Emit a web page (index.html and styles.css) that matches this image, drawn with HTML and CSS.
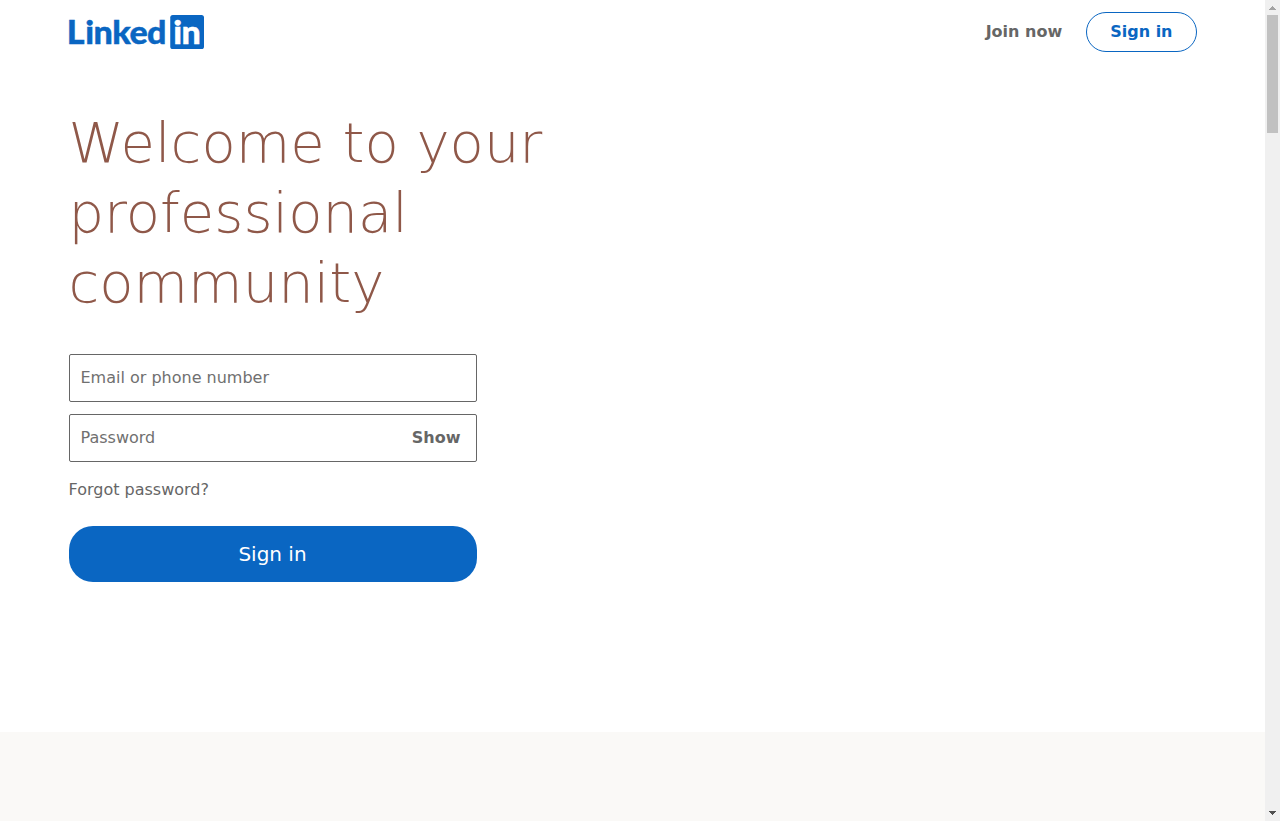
FILE: index.html
```html
<!DOCTYPE html>
<html lang="en">
<head>
<meta charset="utf-8">
<title>LinkedIn: Log In or Sign Up</title>
<link rel="stylesheet" href="styles.css">
</head>
<body>
<div class="viewport">
  <div class="page">
    <header class="nav">
      <a class="logo" aria-label="LinkedIn">
        <svg width="135" height="34" viewBox="0 0 84 21" preserveAspectRatio="none">
          <text class="logo-text" transform="scale(1.07 1)" y="17.9" x="-1.3 9.4 14.2 25.2 35.2 45.3">Linked</text>
          <rect class="logo-box" x="63" y="0" width="21" height="21" rx="1.6"/>
          <text class="logo-text logo-text-light" transform="scale(1.07 1)" y="17.9" x="60.6 65.4">in</text>
        </svg>
      </a>
      <nav class="nav-actions">
        <a class="join">Join now</a>
        <a class="nav-signin">Sign in</a>
      </nav>
    </header>
    <main class="hero">
      <h1 class="headline">Welcome to your professional community</h1>
      <form class="form">
        <div class="field"><span class="hint">Email or phone number</span></div>
        <div class="field"><span class="hint">Password</span><b class="show">Show</b></div>
        <a class="forgot">Forgot password?</a>
        <button class="submit" type="button">Sign in</button>
      </form>
    </main>
    <section class="band"></section>
  </div>
  <div class="scrollbar">
    <svg class="arrow" width="15" height="15" shape-rendering="crispEdges"><path fill="#a3a3a3" d="M7 6h1v1h1v1h1v1h1v1H4V9h1V8h1V7h1z"/></svg>
    <div class="thumb"></div>
    <svg class="arrow arrow-down" width="15" height="15" shape-rendering="crispEdges"><path fill="#505050" d="M4 5h7v1h-1v1H9v1H8v1H7V8H6V7H5V6H4z"/></svg>
  </div>
</div>
</body>
</html>
```
FILE: styles.css
```css
* { box-sizing: border-box; }
body {
  margin: 0;
  background: #fff;
  font-family: "DejaVu Sans", sans-serif;
  font-size: 16px;
  color: #666;
}
.viewport { display: flex; height: 821px; overflow: hidden; }
.page { flex: 1; display: flex; flex-direction: column; }
.nav {
  width: 1128px;
  height: 64px;
  margin: 0 auto;
  display: flex;
  align-items: center;
  justify-content: space-between;
}
.logo { display: block; height: 34px; padding-left: 0.5px; }
.logo svg { display: block; overflow: visible; }
.logo-text {
  font-family: Lato, sans-serif;
  font-weight: 900;
  font-size: 19.8px;
  fill: #0a66c2;
  stroke: #0a66c2;
  stroke-width: 0.25px;
}
.logo-text-light { fill: #fff; stroke: #fff; }
.logo-box { fill: #0a66c2; }
.nav-actions { display: flex; align-items: center; gap: 24px; font-weight: 700; line-height: 20px; }
.nav-signin {
  padding: 9px 23px;
  border: 1px solid #0a66c2;
  border-radius: 24px;
  color: #0a66c2;
}
.hero { width: 1128px; height: 668px; margin: 0 auto; padding-top: 44px; }
.headline {
  width: 520px;
  margin: 0;
  font-size: 56px;
  font-weight: 200;
  line-height: 70px;
  color: #8f5849;
}
.form { width: 408px; margin-top: 36px; display: flex; flex-direction: column; }
.field {
  height: 48px;
  margin-bottom: 12px;
  padding: 0 15px 2px 11px;
  border: 1px solid #666;
  border-radius: 2px;
  display: flex;
  align-items: center;
  justify-content: space-between;
}
.hint { color: #707070; }
.forgot { margin-top: 4px; line-height: 24px; }
.submit {
  height: 56px;
  margin-top: 24px;
  padding: 0;
  border: 0;
  border-radius: 24px;
  background: #0a66c2;
  color: #fff;
  font: 20px "DejaVu Sans", sans-serif;
}
.band { flex: 1; background: #faf9f7; }
.scrollbar { width: 15px; background: #f0f0f0; display: flex; flex-direction: column; }
.arrow { display: block; }
.arrow-down { margin-top: auto; }
.thumb { height: 118px; margin: 0 2px; background: #c1c1c1; }
```
